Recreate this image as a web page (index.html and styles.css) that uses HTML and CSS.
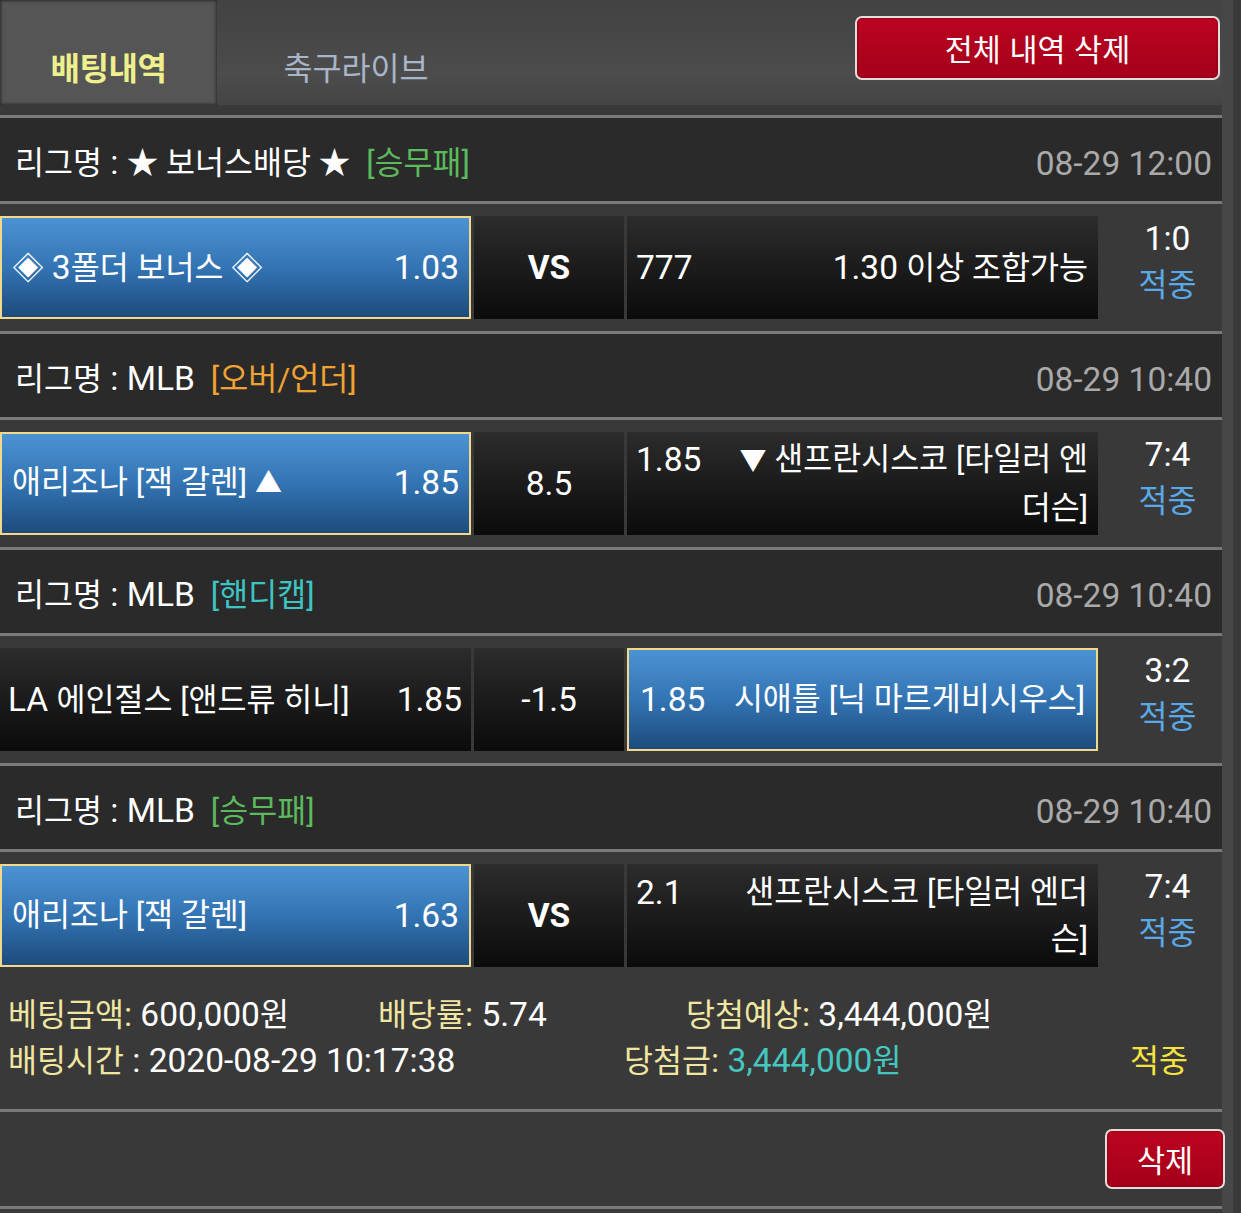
FILE: index.html
```html
<!DOCTYPE html>
<html lang="ko">
<head>
<meta charset="utf-8">
<title>배팅내역</title>
<link rel="stylesheet" href="styles.css">
</head>
<body>
<div class="page">
  <div class="main">
    <header class="top">
      <div class="tab active">배팅내역</div>
      <div class="tab">축구라이브</div>
      <div class="top-space"></div>
      <button class="btn-red btn-all">전체 내역 삭제</button>
    </header>

    <div class="list">
      <div class="league">
        <div class="lname"><span class="k">리그명</span> : <span class="k">★ 보너스배당 ★</span><span class="k cat green">[승무패]</span></div>
        <div class="ltime">08-29 12:00</div>
      </div>
      <div class="match">
        <div class="cell pick side-l"><div class="inner"><span class="nm"><span class="k">◈ </span>3<span class="k">폴더 보너스 ◈</span></span><span class="od">1.03</span></div></div>
        <div class="cell mid"><b>VS</b></div>
        <div class="cell side-r"><div class="inner"><span class="od">777</span><span class="nm">1.30 <span class="k">이상 조합가능</span></span></div></div>
        <div class="score"><div>1:0</div><div class="k hit">적중</div></div>
      </div>

      <div class="league">
        <div class="lname"><span class="k">리그명</span> : MLB<span class="k cat orange">[오버/언더]</span></div>
        <div class="ltime">08-29 10:40</div>
      </div>
      <div class="match">
        <div class="cell pick side-l"><div class="inner"><span class="nm k">애리조나 [잭 갈렌] <span class="tri">▲</span></span><span class="od">1.85</span></div></div>
        <div class="cell mid">8.5</div>
        <div class="cell side-r"><div class="inner"><span class="od">1.85</span><span class="nm k"><span class="tri">▼</span> 샌프란시스코 [타일러 엔더슨]</span></div></div>
        <div class="score"><div>7:4</div><div class="k hit">적중</div></div>
      </div>

      <div class="league">
        <div class="lname"><span class="k">리그명</span> : MLB<span class="k cat teal">[핸디캡]</span></div>
        <div class="ltime">08-29 10:40</div>
      </div>
      <div class="match">
        <div class="cell side-l"><div class="inner"><span class="nm">LA <span class="k">에인절스 [앤드류 히니]</span></span><span class="od">1.85</span></div></div>
        <div class="cell mid">-1.5</div>
        <div class="cell pick side-r"><div class="inner"><span class="od">1.85</span><span class="nm k">시애틀 [닉 마르게비시우스]</span></div></div>
        <div class="score"><div>3:2</div><div class="k hit">적중</div></div>
      </div>

      <div class="league">
        <div class="lname"><span class="k">리그명</span> : MLB<span class="k cat green">[승무패]</span></div>
        <div class="ltime">08-29 10:40</div>
      </div>
      <div class="match last">
        <div class="cell pick side-l"><div class="inner"><span class="nm k">애리조나 [잭 갈렌]</span><span class="od">1.63</span></div></div>
        <div class="cell mid"><b>VS</b></div>
        <div class="cell side-r"><div class="inner"><span class="od">2.1</span><span class="nm k">샌프란시스코 [타일러 엔더슨]</span></div></div>
        <div class="score"><div>7:4</div><div class="k hit">적중</div></div>
      </div>
      <div class="summary">
        <div class="sum-row">
          <div class="c1 w1"><span class="k lbl">베팅금액</span><span class="lbl">:</span> 600,000<span class="k">원</span></div>
          <div class="c2 w2"><span class="k lbl">배당률</span><span class="lbl">:</span> 5.74</div>
          <div class="c3"><span class="k lbl">당첨예상</span><span class="lbl">:</span> 3,444,000<span class="k">원</span></div>
        </div>
        <div class="sum-row">
          <div class="c1 w3"><span class="k lbl">배팅시간</span> : 2020-08-29 10:17:38</div>
          <div class="c2 w4"><span class="k lbl">당첨금</span><span class="lbl">:</span> <span class="win">3,444,000<span class="k">원</span></span></div>
          <div class="c3"><span class="k yes">적중</span></div>
        </div>
      </div>
      <div class="actions">
        <button class="btn-red btn-del">삭제</button>
      </div>
    </div>
  </div>
  <div class="rail"></div>
  <div class="rest"></div>
</div>
</body>
</html>
```

FILE: styles.css
```css
* {
  box-sizing: border-box;
  margin: 0;
  padding: 0;
}

body {
  margin: 0;
  background: #393939;
  font-family: Roboto, "Noto Sans CJK KR", sans-serif;
  font-size: 33.5px;
  color: #ffffff;
  width: 1241px;
  overflow: hidden;
}

.k {
  font-size: 31.5px;
}

.tri {
  font-size: 27px;
}

.page {
  display: flex;
  min-height: 1213px;
}

.main {
  width: 1222px;
  flex: none;
  background: #393939;
}

.rail {
  width: 11px;
  flex: none;
  background: #474747;
}

.rest {
  flex: 1;
  background: #3a3a3a;
}

/* header */
.top {
  height: 105px;
  display: flex;
  align-items: flex-start;
  background: linear-gradient(#424242, #4c4c4c 70%, #444444);
}

.tab {
  height: 105px;
  padding-top: 30px;
  font-family: "Noto Sans CJK KR", sans-serif;
  font-size: 31.5px;
  line-height: 72px;
  text-align: center;
  color: #a9b5c8;
  width: 278px;
}

.tab.active {
  width: 217px;
  background: #555555;
  color: #eef08e;
  font-weight: 700;
  font-size: 32px;
  letter-spacing: -0.5px;
  box-shadow: inset 0 0 3px 1px #2a2a2a;
}

.top-space {
  flex: 1;
}

.btn-red {
  font-family: "Noto Sans CJK KR", sans-serif;
  color: #ffffff;
  background: linear-gradient(#bb0420, #a5001a);
  border: 2px solid #e6dcdc;
  border-radius: 7px;
  box-shadow: inset 0 0 2px #5a000c;
  cursor: pointer;
}

.btn-all {
  width: 365px;
  height: 64px;
  margin-top: 16px;
  margin-right: 2px;
  font-size: 30.5px;
  line-height: 56px;
}

/* list */
.list {
  padding-top: 10px;
}

.league {
  border-top: 3px solid #7a7a7a;
  background: #2a2a2a;
  height: 86px;
  display: flex;
  align-items: center;
  justify-content: space-between;
  padding: 8px 10px 0 15px;
  line-height: 46px;
}

.ltime {
  color: #a9a9a9;
}

.cat {
  margin-left: 16px;
}

.green { color: #5cb95c; }
.orange { color: #f0a232; }
.teal { color: #3fc4c4; }

.match {
  border-top: 3px solid #7a7a7a;
  display: grid;
  grid-template-columns: 471px 150px 471px 1fr;
  column-gap: 3px;
  padding: 12px 0 12px;
  line-height: 47px;
}

.match.last {
  padding-bottom: 0;
}

.cell {
  height: 103px;
  display: flex;
  align-items: center;
  background: linear-gradient(#2c2c2c, #0b0b0b);
}

.cell.pick {
  background: linear-gradient(#4c93d4, #3374b3 50%, #1d4b7d);
  border: 2px solid #f2d88c;
}

.inner {
  display: flex;
  width: 100%;
  align-items: flex-start;
}

.side-l .inner {
  justify-content: space-between;
  padding: 0 9px 0 8px;
}

.side-l.pick .inner {
  padding: 0 10px 0 10px;
}

.side-r .inner {
  padding: 0 10px 0 9px;
}

.side-r.pick .inner {
  padding: 0 11px 0 11px;
}

.side-r .od {
  flex: none;
  width: 90px;
}

.side-r .nm {
  flex: 1;
  text-align: right;
  word-break: break-all;
}

.mid {
  justify-content: center;
}

.mid b {
  font-weight: 700;
}

.score {
  text-align: center;
  padding-left: 12px;
  line-height: 47px;
  margin-top: -1px;
}

.hit {
  color: #5aa8e6;
}

/* summary */
.summary {
  padding: 25px 0 25px 8px;
  line-height: 45px;
}

.sum-row {
  display: flex;
}

.w1 { width: 370px; }
.w2 { width: 308px; }
.w3 { width: 616px; }
.w4 { width: 506px; }

.lbl {
  color: #f0e6a2;
}

.win {
  color: #45c7c1;
}

.yes {
  color: #f3e23f;
}

.actions {
  border-top: 3px solid #7a7a7a;
  border-bottom: 3px solid #7a7a7a;
  height: 100px;
  display: flex;
  justify-content: flex-end;
  align-items: center;
}

.btn-del {
  position: relative;
  z-index: 1;
  width: 120px;
  height: 60px;
  margin-right: -3px;
  font-size: 30.5px;
  line-height: 52px;
}
```
